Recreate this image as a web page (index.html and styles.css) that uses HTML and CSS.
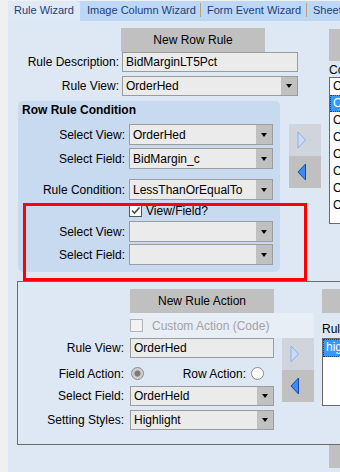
FILE: index.html
```html
<!DOCTYPE html>
<html lang="en">
<head>
    <meta charset="UTF-8">
    <title>Rule Wizard</title>
    <link rel="stylesheet" href="styles.css">
</head>
<body>
    <div class="tabs">
        <div class="tab tab-active">Rule Wizard</div>
        <div class="tab tab-image">Image Column Wizard</div>
        <div class="tab tab-sep tab-form">Form Event Wizard</div>
        <div class="tab tab-sep">Sheet Wizard</div>
    </div>

    <div class="page">
        <div class="top">
            <div class="top-left">
                <div class="btn btn-rule">New Row Rule</div>
                <div class="row">
                    <span class="lbl">Rule Description:</span>
                    <div class="input input-wide">BidMarginLT5Pct</div>
                </div>
                <div class="row row-view">
                    <span class="lbl">Rule View:</span>
                    <div class="select input-wide"><span class="val">OrderHed</span><span class="dd"></span></div>
                </div>

                <div class="cond-wrap">
                    <div class="panel">
                        <div class="panel-title">Row Rule Condition</div>
                        <div class="prow">
                            <span class="lbl">Select View:</span>
                            <div class="select"><span class="val">OrderHed</span><span class="dd"></span></div>
                        </div>
                        <div class="prow prow-2">
                            <span class="lbl">Select Field:</span>
                            <div class="select"><span class="val">BidMargin_c</span><span class="dd"></span></div>
                        </div>
                        <div class="prow prow-3">
                            <span class="lbl">Rule Condition:</span>
                            <div class="select"><span class="val">LessThanOrEqualTo</span><span class="dd"></span></div>
                        </div>
                        <div class="check-row">
                            <span class="check">
                                <svg width="11" height="11" viewBox="0 0 11 11"><path d="M2 5.5 L4.5 8 L9.5 2.5" fill="none" stroke="#4a4a4a" stroke-width="1.6"/></svg>
                            </span>
                            <span class="check-text">View/Field?</span>
                        </div>
                        <div class="prow prow-4">
                            <span class="lbl">Select View:</span>
                            <div class="select"><span class="val"></span><span class="dd"></span></div>
                        </div>
                        <div class="prow prow-5">
                            <span class="lbl">Select Field:</span>
                            <div class="select"><span class="val"></span><span class="dd"></span></div>
                        </div>
                    </div>

                    <div class="arrows arrows-top">
                        <div class="arrow-add">
                            <svg width="10" height="18" viewBox="0 0 10 18"><polygon points="1,1 8.5,9 1,17" fill="#c9dcf4" stroke="#8eb0e2" stroke-width="1"/></svg>
                        </div>
                        <div class="arrow-remove">
                            <svg width="10" height="18" viewBox="0 0 10 18"><polygon points="8.5,1 1,9 8.5,17" fill="#3d8ce9" stroke="#1747b3" stroke-width="1"/></svg>
                        </div>
                    </div>
                </div>
            </div>

            <div class="top-right">
                <div class="side-box"></div>
                <div class="side-label">Conditions:</div>
                <div class="list list-cond">
                    <div class="item">Condition 1</div>
                    <div class="item item-sel">Condition 2</div>
                    <div class="item">Condition 3</div>
                    <div class="item">Condition 4</div>
                    <div class="item">Condition 5</div>
                    <div class="item">Condition 6</div>
                    <div class="item">Condition 7</div>
                    <div class="item">Condition 8</div>
                </div>
            </div>
        </div>

        <div class="group">
            <div class="group-main">
                <div class="btn btn-action">New Rule Action</div>
                <div class="custom">
                    <span class="check check-off"></span>
                    <span class="custom-text">Custom Action (Code)</span>
                </div>
                <div class="action-body">
                    <div class="action-fields">
                        <div class="arow">
                            <span class="lbl">Rule View:</span>
                            <div class="input">OrderHed</div>
                        </div>
                        <div class="arow arow-radio">
                            <span class="lbl">Field Action:</span>
                            <span class="radio radio-on"></span>
                            <span class="lbl-row">Row Action:</span>
                            <span class="radio"></span>
                        </div>
                        <div class="arow arow-field">
                            <span class="lbl">Select Field:</span>
                            <div class="select"><span class="val">OrderHeld</span><span class="dd"></span></div>
                        </div>
                        <div class="arow arow-style">
                            <span class="lbl">Setting Styles:</span>
                            <div class="select"><span class="val">Highlight</span><span class="dd"></span></div>
                        </div>
                    </div>
                    <div class="arrows">
                        <div class="arrow-add">
                            <svg width="10" height="18" viewBox="0 0 10 18"><polygon points="1,1 8.5,9 1,17" fill="#c9dcf4" stroke="#8eb0e2" stroke-width="1"/></svg>
                        </div>
                        <div class="arrow-remove">
                            <svg width="10" height="18" viewBox="0 0 10 18"><polygon points="8.5,1 1,9 8.5,17" fill="#3d8ce9" stroke="#1747b3" stroke-width="1"/></svg>
                        </div>
                    </div>
                </div>
            </div>
            <div class="group-right">
                <div class="side-box side-box-sm"></div>
                <div class="side-label side-label-ru">Rule Actions:</div>
                <div class="list list-action">
                    <div class="item item-sel item-first">highlight</div>
                </div>
            </div>
        </div>

        <div class="bottom-box"></div>

        <div class="highlight-frame"></div>
    </div>
</body>
</html>
```

FILE: styles.css
```css
* {
    box-sizing: border-box;
}

html, body {
    overflow: hidden;
}

body {
    margin: 0;
    padding: 0;
    background-color: #f0f0f0;
    font-family: "Liberation Sans", Arial, sans-serif;
    font-size: 12px;
    color: #000;
}

/* tab strip */
.tabs {
    display: flex;
    height: 20px;
    margin-left: 8px;
    margin-top: 1px;
    background-color: #bdd8f6;
    font-size: 11px;
    color: #1e3d7b;
    white-space: nowrap;
    overflow: hidden;
}

.tab {
    line-height: 19px;
    padding-left: 6px;
    position: relative;
    flex-shrink: 0;
}

.tab-active {
    width: 72px;
    background-color: #deeaf8;
    border-top-right-radius: 3px;
}

.tab-image {
    width: 120px;
    padding-left: 7px;
}

.tab-form {
    width: 106px;
}

.tab-sep {
    padding-left: 7px;
}

.tab-sep::before {
    content: "";
    position: absolute;
    left: 0;
    top: 2px;
    height: 14px;
    border-left: 1px solid #b5a37e;
}

.page {
    position: relative;
    margin-left: 8px;
    height: 451px;
    background-color: #dee8f5;
}

.top {
    display: flex;
    height: 260px;
}

.top-left {
    width: 313px;
    flex-shrink: 0;
    padding-top: 7px;
}

.btn {
    display: flex;
    align-items: center;
    justify-content: center;
    width: 144px;
    height: 24px;
    background-color: #c0c0c0;
}

.btn-rule {
    margin-left: 113px;
}

.row {
    display: flex;
    align-items: center;
    height: 20px;
}

.row .lbl {
    width: 111px;
    text-align: right;
    margin-right: 3px;
}

.row-view {
    margin-top: 4px;
}

.input,
.select {
    display: flex;
    align-items: center;
    width: 144px;
    height: 20px;
    border: 1px solid #9c9c9c;
    background-color: #ebebeb;
    padding-left: 3px;
    white-space: nowrap;
    overflow: hidden;
}

.select {
    padding-left: 0;
}

.input-wide {
    width: 176px;
}

.select .val {
    flex: 1;
    padding-left: 3px;
    overflow: hidden;
}

.select .dd {
    width: 16px;
    height: 100%;
    background-color: #c0c0c0;
    display: flex;
    align-items: center;
    justify-content: center;
}

.select .dd::after {
    content: "";
    border-top: 4px solid #000;
    border-left: 3.5px solid transparent;
    border-right: 3.5px solid transparent;
}

/* condition panel */
.cond-wrap {
    display: flex;
    margin-top: 5px;
    padding-left: 10px;
}

.panel {
    width: 262px;
    height: 171px;
    background-color: #c8daf0;
    border-radius: 5px;
}

.panel-title {
    height: 23px;
    padding: 2px 0 0 4px;
    font-weight: bold;
    line-height: 14px;
}

.prow {
    display: flex;
    align-items: center;
    height: 21px;
}

.prow .select {
    height: 21px;
}

.prow .lbl {
    width: 107px;
    margin-right: 4px;
    text-align: right;
}

.prow-2 { margin-top: 3px; }
.prow-3 { margin-top: 10px; }
.prow-4 { margin-top: 3px; }
.prow-5 { margin-top: 2px; }

.check-row {
    display: flex;
    align-items: center;
    height: 15px;
    margin-top: 3px;
    padding-left: 111px;
}

.check {
    display: flex;
    align-items: center;
    justify-content: center;
    width: 13px;
    height: 13px;
    background-color: #fff;
    border: 1px solid #555;
}

.check-text {
    margin-left: 4px;
}

.check-off {
    background-color: #f2f2f2;
    border-color: #b4b4b4;
}

/* add / remove arrows */
.arrows {
    width: 32px;
    flex-shrink: 0;
}

.arrows-top {
    margin-left: 9px;
    margin-top: 23px;
}

.arrow-add,
.arrow-remove {
    display: flex;
    align-items: center;
    justify-content: center;
    height: 32px;
    padding-right: 6px;
}

.arrow-add {
    background-color: #d0d5dd;
}

.arrow-remove {
    background-color: #c0c0c0;
}

/* right hand list column */
.top-right {
    margin-left: 8px;
    padding-top: 8px;
    width: 60px;
    flex-shrink: 0;
}

.side-box {
    width: 60px;
    height: 32px;
    background-color: #c0c0c0;
}

.side-label {
    height: 16px;
    padding-top: 3px;
    line-height: 13px;
    white-space: nowrap;
}

.list {
    width: 120px;
    background-color: #fff;
    border: 1px solid #6a6a6a;
    overflow: hidden;
    white-space: nowrap;
}

.list-cond {
    height: 147px;
}

.item {
    height: 17px;
    line-height: 17px;
    padding-left: 3px;
}

.list-cond .item:first-child {
    margin-top: 0;
}

.item-sel {
    background-color: #3399ff;
    color: #fff;
    outline: 1px dotted #1a3d70;
    outline-offset: -1px;
}

/* action group */
.group {
    display: flex;
    margin-left: 9px;
    height: 164px;
    border: 1px solid #6b6b6b;
    border-right: none;
}

.group-main {
    width: 296px;
    flex-shrink: 0;
    padding-top: 7px;
}

.btn-action {
    margin-left: 112px;
    height: 24px;
}

.custom {
    display: flex;
    align-items: center;
    margin-left: 112px;
    width: 184px;
    height: 25px;
    background-color: #e8eef6;
}

.custom-text {
    margin-left: 9px;
    color: #a3a3a3;
}

.action-body {
    display: flex;
}

.action-fields {
    width: 264px;
}

.arow {
    display: flex;
    align-items: center;
    height: 20px;
}

.arow .lbl {
    width: 106px;
    margin-right: 6px;
    text-align: right;
}

.arow-radio {
    height: 15px;
    margin-top: 8px;
}

.arow-field { margin-top: 5px; }
.arow-style { margin-top: 4px; }

.radio {
    width: 13px;
    height: 13px;
    border-radius: 50%;
    border: 1px solid #8a8a8a;
    background-color: #fff;
    flex-shrink: 0;
}

.radio-on {
    margin-left: 1px;
    background: radial-gradient(circle, #7a7a7a 0, #7a7a7a 2.5px, #c8c8c8 3.5px, #e4e4e4 100%);
}

.lbl-row {
    width: 102px;
    margin-right: 5px;
    text-align: right;
}

.group-right {
    margin-left: 8px;
    padding-top: 7px;
    flex-shrink: 0;
}

.side-box-sm {
    height: 24px;
}

.side-label-ru {
    height: 25px;
    padding-top: 10px;
}

.list-action {
    height: 68px;
}

.item-first {
    height: 18px;
}

.bottom-box {
    margin-left: 321px;
    width: 20px;
    height: 23px;
    background-color: #c0c0c0;
}

/* red annotation frame drawn over the form */
.highlight-frame {
    position: absolute;
    left: 15px;
    top: 182px;
    width: 284px;
    height: 78px;
    border: 3px solid #ff0000;
}
```
